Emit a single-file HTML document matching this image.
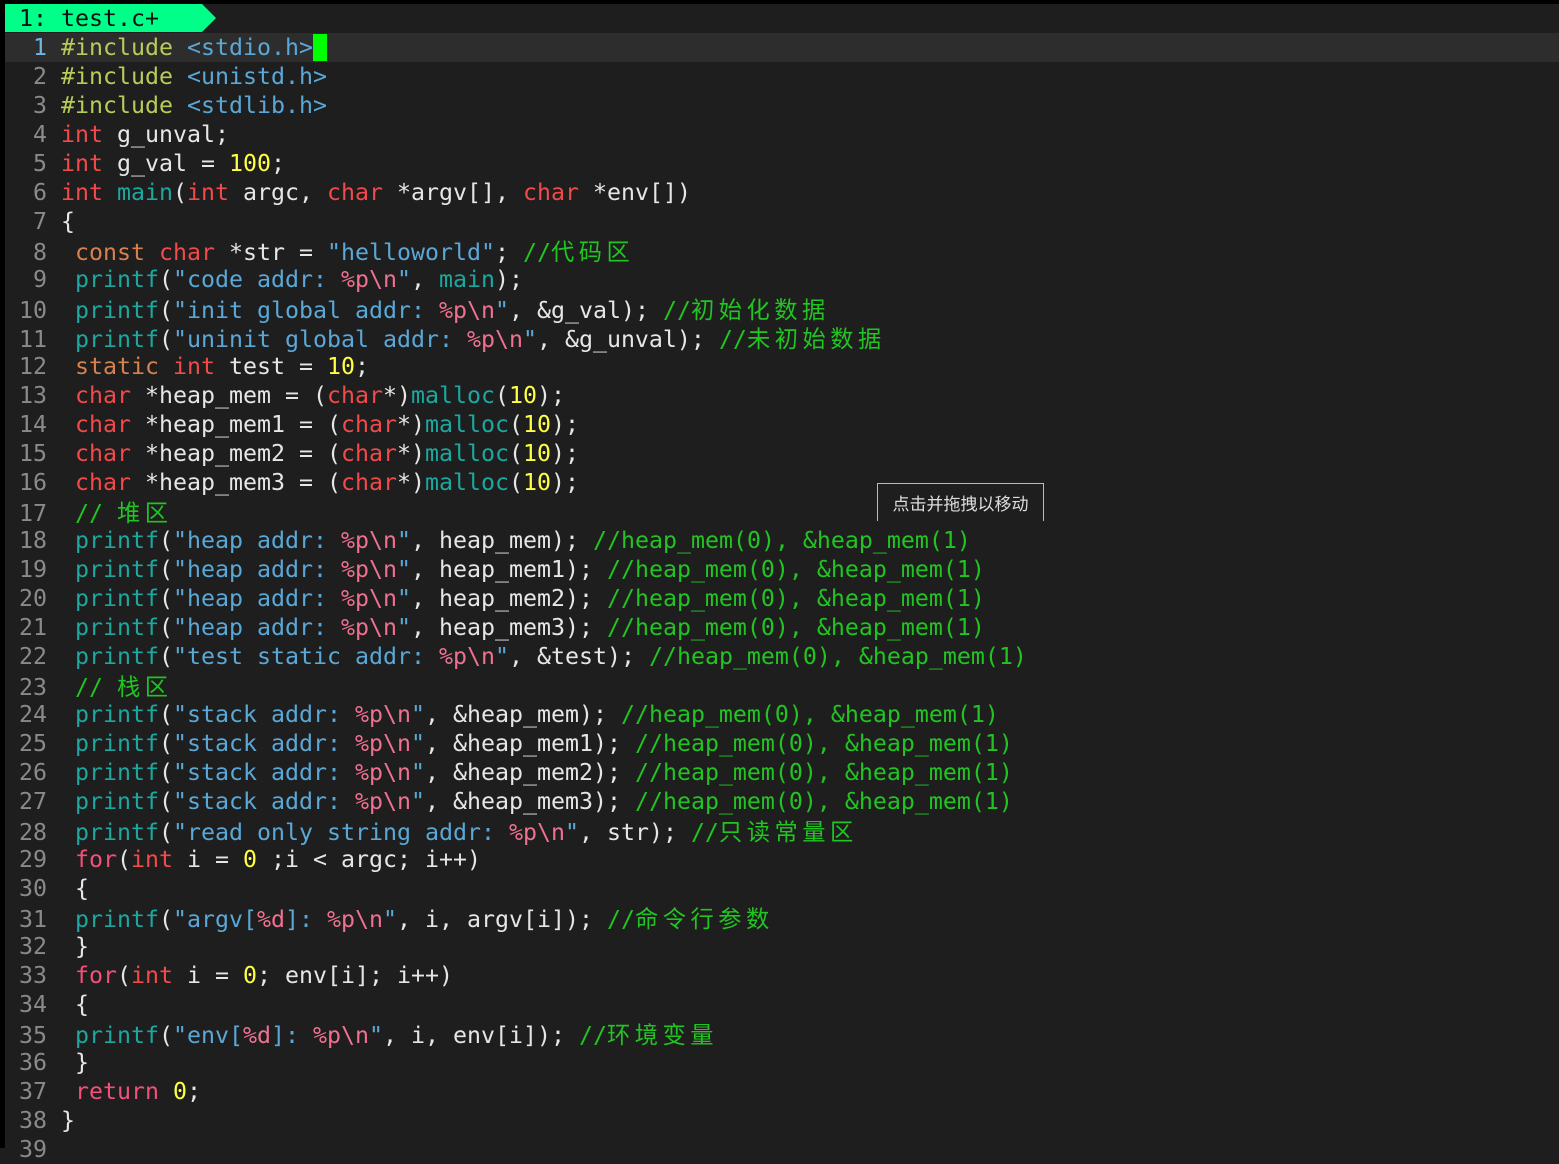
<!DOCTYPE html>
<html><head><meta charset="utf-8"><style>
html,body{margin:0;padding:0;width:1559px;height:1148px;overflow:hidden;background:#1e1e1e;}
#lb{position:absolute;left:0;top:0;width:5px;height:1148px;background:#000;}
#top{position:absolute;left:0;top:0;width:1559px;height:4px;background:#000;}
#tab{position:absolute;left:5px;top:4px;height:28px;}
#tabbar{position:absolute;left:5px;top:32px;width:1554px;height:1px;background:#1e1e1e;}
.code{position:absolute;left:0;top:33px;font-family:"DejaVu Sans Mono","Liberation Mono","Noto Sans CJK SC",monospace;font-size:23.25px;color:#e6e6e6;}
.l{height:29px;line-height:29px;white-space:pre;position:relative;}
.ln{display:inline-block;width:47px;text-align:right;color:#8a8a8a;margin-right:14px;}
.cur{background:#2d2d2d;width:1554px;margin-left:5px;}
.cur .ln{width:42px;color:#6cb6e8;}
.p{color:#b8cc58}.h{color:#5aa8d8}.k{color:#f24a4a}.r{color:#f2507a}.t{color:#d8804e}
.f{color:#1aa8a0}.s{color:#5aa8d8}.e{color:#f07090}.n{color:#ffff44}.c{color:#22c422}
.z{font-family:"Noto Sans CJK SC",sans-serif;letter-spacing:4.5px}
#tip{position:absolute;left:877px;top:483px;width:167px;height:38px;border:1px solid #bbb;border-bottom:none;background:#1e1e1e;color:#ddd;font-family:"Noto Sans CJK SC",sans-serif;font-size:17px;line-height:38px;text-align:center;box-sizing:border-box;}
</style></head><body>
<div id="top"></div>
<svg id="tab" width="212" height="28"><polygon points="0,0 197,0 211,14 197,28 0,28" fill="#00ff88"/><text x="14" y="22" font-family="DejaVu Sans Mono,Liberation Mono,monospace" font-size="23.25" fill="#111">1: test.c+</text></svg>
<div class="code">
<div class="l cur"><span class="ln">1</span><span class="p">#include</span> <span class="h">&lt;stdio.h&gt;</span><span style="background:#00ff00"> </span></div>
<div class="l"><span class="ln">2</span><span class="p">#include</span> <span class="h">&lt;unistd.h&gt;</span></div>
<div class="l"><span class="ln">3</span><span class="p">#include</span> <span class="h">&lt;stdlib.h&gt;</span></div>
<div class="l"><span class="ln">4</span><span class="k">int</span> g_unval;</div>
<div class="l"><span class="ln">5</span><span class="k">int</span> g_val = <span class="n">100</span>;</div>
<div class="l"><span class="ln">6</span><span class="k">int</span> <span class="f">main</span>(<span class="k">int</span> argc, <span class="k">char</span> *argv[], <span class="k">char</span> *env[])</div>
<div class="l"><span class="ln">7</span>{</div>
<div class="l"><span class="ln">8</span> <span class="t">const</span> <span class="k">char</span> *str = <span class="s">"helloworld"</span>; <span class="c">//<span class="z">代码区</span></span></div>
<div class="l"><span class="ln">9</span> <span class="f">printf</span>(<span class="s">"code addr: </span><span class="e">%p\n</span><span class="s">"</span>, <span class="f">main</span>);</div>
<div class="l"><span class="ln">10</span> <span class="f">printf</span>(<span class="s">"init global addr: </span><span class="e">%p\n</span><span class="s">"</span>, &amp;g_val); <span class="c">//<span class="z">初始化数据</span></span></div>
<div class="l"><span class="ln">11</span> <span class="f">printf</span>(<span class="s">"uninit global addr: </span><span class="e">%p\n</span><span class="s">"</span>, &amp;g_unval); <span class="c">//<span class="z">未初始数据</span></span></div>
<div class="l"><span class="ln">12</span> <span class="t">static</span> <span class="k">int</span> test = <span class="n">10</span>;</div>
<div class="l"><span class="ln">13</span> <span class="k">char</span> *heap_mem = (<span class="k">char</span>*)<span class="f">malloc</span>(<span class="n">10</span>);</div>
<div class="l"><span class="ln">14</span> <span class="k">char</span> *heap_mem1 = (<span class="k">char</span>*)<span class="f">malloc</span>(<span class="n">10</span>);</div>
<div class="l"><span class="ln">15</span> <span class="k">char</span> *heap_mem2 = (<span class="k">char</span>*)<span class="f">malloc</span>(<span class="n">10</span>);</div>
<div class="l"><span class="ln">16</span> <span class="k">char</span> *heap_mem3 = (<span class="k">char</span>*)<span class="f">malloc</span>(<span class="n">10</span>);</div>
<div class="l"><span class="ln">17</span> <span class="c">// <span class="z">堆区</span></span></div>
<div class="l"><span class="ln">18</span> <span class="f">printf</span>(<span class="s">"heap addr: </span><span class="e">%p\n</span><span class="s">"</span>, heap_mem); <span class="c">//heap_mem(0), &amp;heap_mem(1)</span></div>
<div class="l"><span class="ln">19</span> <span class="f">printf</span>(<span class="s">"heap addr: </span><span class="e">%p\n</span><span class="s">"</span>, heap_mem1); <span class="c">//heap_mem(0), &amp;heap_mem(1)</span></div>
<div class="l"><span class="ln">20</span> <span class="f">printf</span>(<span class="s">"heap addr: </span><span class="e">%p\n</span><span class="s">"</span>, heap_mem2); <span class="c">//heap_mem(0), &amp;heap_mem(1)</span></div>
<div class="l"><span class="ln">21</span> <span class="f">printf</span>(<span class="s">"heap addr: </span><span class="e">%p\n</span><span class="s">"</span>, heap_mem3); <span class="c">//heap_mem(0), &amp;heap_mem(1)</span></div>
<div class="l"><span class="ln">22</span> <span class="f">printf</span>(<span class="s">"test static addr: </span><span class="e">%p\n</span><span class="s">"</span>, &amp;test); <span class="c">//heap_mem(0), &amp;heap_mem(1)</span></div>
<div class="l"><span class="ln">23</span> <span class="c">// <span class="z">栈区</span></span></div>
<div class="l"><span class="ln">24</span> <span class="f">printf</span>(<span class="s">"stack addr: </span><span class="e">%p\n</span><span class="s">"</span>, &amp;heap_mem); <span class="c">//heap_mem(0), &amp;heap_mem(1)</span></div>
<div class="l"><span class="ln">25</span> <span class="f">printf</span>(<span class="s">"stack addr: </span><span class="e">%p\n</span><span class="s">"</span>, &amp;heap_mem1); <span class="c">//heap_mem(0), &amp;heap_mem(1)</span></div>
<div class="l"><span class="ln">26</span> <span class="f">printf</span>(<span class="s">"stack addr: </span><span class="e">%p\n</span><span class="s">"</span>, &amp;heap_mem2); <span class="c">//heap_mem(0), &amp;heap_mem(1)</span></div>
<div class="l"><span class="ln">27</span> <span class="f">printf</span>(<span class="s">"stack addr: </span><span class="e">%p\n</span><span class="s">"</span>, &amp;heap_mem3); <span class="c">//heap_mem(0), &amp;heap_mem(1)</span></div>
<div class="l"><span class="ln">28</span> <span class="f">printf</span>(<span class="s">"read only string addr: </span><span class="e">%p\n</span><span class="s">"</span>, str); <span class="c">//<span class="z">只读常量区</span></span></div>
<div class="l"><span class="ln">29</span> <span class="r">for</span>(<span class="k">int</span> i = <span class="n">0</span> ;i &lt; argc; i++)</div>
<div class="l"><span class="ln">30</span> {</div>
<div class="l"><span class="ln">31</span> <span class="f">printf</span>(<span class="s">"argv[</span><span class="e">%d</span><span class="s">]: </span><span class="e">%p\n</span><span class="s">"</span>, i, argv[i]); <span class="c">//<span class="z">命令行参数</span></span></div>
<div class="l"><span class="ln">32</span> }</div>
<div class="l"><span class="ln">33</span> <span class="r">for</span>(<span class="k">int</span> i = <span class="n">0</span>; env[i]; i++)</div>
<div class="l"><span class="ln">34</span> {</div>
<div class="l"><span class="ln">35</span> <span class="f">printf</span>(<span class="s">"env[</span><span class="e">%d</span><span class="s">]: </span><span class="e">%p\n</span><span class="s">"</span>, i, env[i]); <span class="c">//<span class="z">环境变量</span></span></div>
<div class="l"><span class="ln">36</span> }</div>
<div class="l"><span class="ln">37</span> <span class="r">return</span> <span class="n">0</span>;</div>
<div class="l"><span class="ln">38</span>}</div>
<div class="l"><span class="ln">39</span></div>
</div>
<div id="tip">点击并拖拽以移动</div>
<div id="lb"></div>
</body></html>
